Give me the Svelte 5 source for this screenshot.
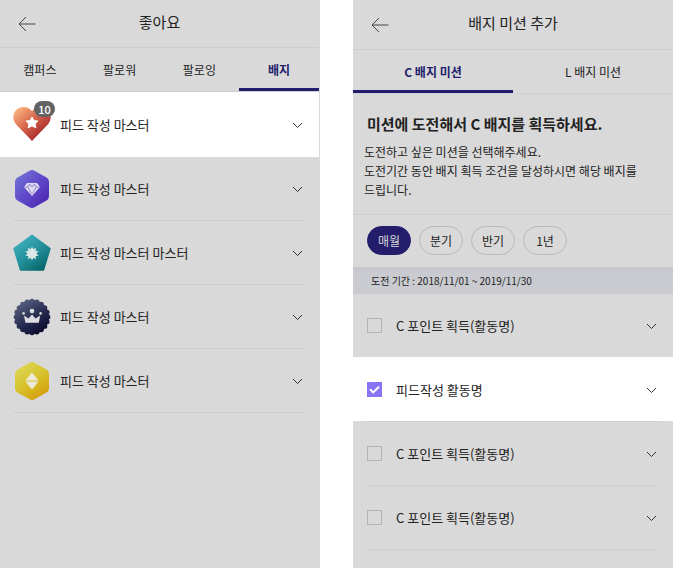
<script>
  const followTabs = ['캠퍼스', '팔로워', '팔로잉', '배지'];
  let followTab = $state('배지');

  const badges = [
    { shape: 'heart', name: '피드 작성 마스터', count: 10 },
    { shape: 'diamond', name: '피드 작성 마스터' },
    { shape: 'pentagon', name: '피드 작성 마스터 마스터' },
    { shape: 'crown', name: '피드 작성 마스터' },
    { shape: 'gold', name: '피드 작성 마스터' }
  ];

  const missionTabs = ['C 배지 미션', 'L 배지 미션'];
  let missionTab = $state('C 배지 미션');

  const periods = ['매월', '분기', '반기', '1년'];
  let period = $state('매월');

  let missions = $state([
    { name: 'C 포인트 획득(활동명)', checked: false },
    { name: '피드작성 활동명', checked: true },
    { name: 'C 포인트 획득(활동명)', checked: false },
    { name: 'C 포인트 획득(활동명)', checked: false }
  ]);

  const scallops = Array.from({ length: 20 }, (_, i) => {
    const a = (i / 20) * Math.PI * 2;
    return { x: 19 + Math.sin(a) * 15.6, y: 19 - Math.cos(a) * 15.6 };
  });

  const burst = Array.from({ length: 20 }, (_, i) => {
    const a = (i / 20) * Math.PI * 2;
    const r = i % 2 ? 4.4 : 7;
    return `${19 + Math.sin(a) * r},${19.5 - Math.cos(a) * r}`;
  }).join(' ');
</script>

{#snippet back()}
  <button class="back" aria-label="뒤로">
    <svg width="18" height="16" viewBox="0 0 18 16"><path d="M8 1 L1 8 L8 15 M1 8 H17.5" /></svg>
  </button>
{/snippet}

{#snippet chevron()}
  <svg class="chevron" width="11" height="7" viewBox="0 0 11 7"><path d="M1 1 L5.5 5.5 L10 1" /></svg>
{/snippet}

{#snippet icon(shape)}
  <svg width="38" height="38" viewBox="0 0 38 38" aria-hidden="true">
    {#if shape === 'heart'}
      <defs>
        <linearGradient id="g-heart" x1="0.05" y1="0.1" x2="0.75" y2="0.8">
          <stop offset="0" stop-color="#fbb380" /><stop offset="0.5" stop-color="#d96a50" /><stop offset="1" stop-color="#a92d2e" />
        </linearGradient>
      </defs>
      <path d="M19 36 L3.2 19.6 C-1 14.6 -0.4 8.4 3.4 4.8 C7.8 0.8 15 1 19 6.2 C23 1 30.2 0.8 34.6 4.8 C38.4 8.4 39 14.6 34.8 19.6 Z" fill="url(#g-heart)" />
      <path d="M19 12 L20.9 15.6 L25 16 L22.1 18.8 L22.8 22.8 L19 20.9 L15.2 22.8 L15.9 18.8 L13 16 L17.1 15.6 Z" fill="#fff" stroke="#fff" stroke-linejoin="round" />
    {:else if shape === 'diamond'}
      <defs>
        <linearGradient id="g-diamond" x1="0.1" y1="0.1" x2="0.9" y2="0.9">
          <stop offset="0" stop-color="#6f6fd6" /><stop offset="0.5" stop-color="#6048ca" /><stop offset="1" stop-color="#4d28b0" />
        </linearGradient>
      </defs>
      <path d="M16.5 0.8 Q19 -0.6 21.5 0.8 L33.5 7.6 Q36 9 36 11.8 V26.2 Q36 29 33.5 30.4 L21.5 37.2 Q19 38.6 16.5 37.2 L4.5 30.4 Q2 29 2 26.2 V11.8 Q2 9 4.5 7.6 Z" fill="url(#g-diamond)" />
      <path d="M14 13 H24 L27 17 L19 26 L11 17 Z" fill="#dedbf0" />
      <path d="M11.5 17 H15 L16.5 14 L19 17 L21.5 14 L23 17 H26.5 M15 17 L18.5 24 M23 17 L19.5 24" fill="none" stroke="#6850c8" stroke-width="0.6" />
    {:else if shape === 'pentagon'}
      <defs>
        <linearGradient id="g-penta" x1="0.15" y1="0.1" x2="0.8" y2="0.95">
          <stop offset="0" stop-color="#41aec0" /><stop offset="0.5" stop-color="#24919c" /><stop offset="1" stop-color="#08696c" />
        </linearGradient>
      </defs>
      <path d="M19 1.3 L37 14.6 L30.4 36 H7.6 L1 14.6 Z" fill="url(#g-penta)" stroke="url(#g-penta)" stroke-width="1.5" stroke-linejoin="round" />
      <polygon points={burst} fill="#dfe8e8" />
    {:else if shape === 'crown'}
      <defs>
        <linearGradient id="g-crown" gradientUnits="userSpaceOnUse" x1="8" y1="4" x2="28" y2="34">
          <stop offset="0" stop-color="#56607f" /><stop offset="0.5" stop-color="#2b3054" /><stop offset="1" stop-color="#0c0b30" />
        </linearGradient>
      </defs>
      <g fill="url(#g-crown)">
        <circle cx="19" cy="19" r="16.8" />
        {#each scallops as s}<circle cx={s.x} cy={s.y} r="2.7" />{/each}
      </g>
      <g fill="#dcdce2">
        <circle cx="19" cy="13" r="2.3" /><circle cx="10.6" cy="15.4" r="1.3" /><circle cx="27.6" cy="15.4" r="1.3" />
        <path d="M11 17.5 L15.5 20.5 L19 16.5 L22.5 20.5 L27.2 17.5 L25.8 24.8 H12.4 Z" />
      </g>
    {:else}
      <defs>
        <linearGradient id="g-gold" x1="0.2" y1="0.05" x2="0.75" y2="0.95">
          <stop offset="0" stop-color="#dcd653" /><stop offset="0.5" stop-color="#d8c22d" /><stop offset="1" stop-color="#d49f0b" />
        </linearGradient>
      </defs>
      <path d="M16.5 0.8 Q19 -0.6 21.5 0.8 L33.5 7.6 Q36 9 36 11.8 V26.2 Q36 29 33.5 30.4 L21.5 37.2 Q19 38.6 16.5 37.2 L4.5 30.4 Q2 29 2 26.2 V11.8 Q2 9 4.5 7.6 Z" fill="url(#g-gold)" />
      <path d="M19 10.5 L25.5 18.5 H12.5 Z M12.5 19.5 H25.5 L19 27.5 Z" fill="#ecead8" />
    {/if}
  </svg>
{/snippet}

<div class="screens">
  <section class="panel likes">
    <header>
      {@render back()}
      <h1>좋아요</h1>
    </header>
    <nav>
      {#each followTabs as tab}
        <button class:active={tab === followTab} onclick={() => (followTab = tab)}>{tab}</button>
      {/each}
    </nav>
    <ul>
      {#each badges as badge, i}
        <li class:lit={i === 0}>
          <button class="row">
            <span class="icon">
              {@render icon(badge.shape)}
              {#if badge.count}<span class="count">{badge.count}</span>{/if}
            </span>
            <span class="name">{badge.name}</span>
            {@render chevron()}
          </button>
        </li>
      {/each}
    </ul>
  </section>

  <section class="panel add">
    <header>
      {@render back()}
      <h1>배지 미션 추가</h1>
    </header>
    <nav>
      {#each missionTabs as tab}
        <button class:active={tab === missionTab} onclick={() => (missionTab = tab)}>{tab}</button>
      {/each}
    </nav>
    <div class="intro">
      <h2>미션에 도전해서 C 배지를 획득하세요.</h2>
      <p>도전하고 싶은 미션을 선택해주세요.<br />도전기간 동안 배지 획득 조건을 달성하시면 해당 배지를<br />드립니다.</p>
    </div>
    <div class="chips">
      {#each periods as p}
        <button class:on={p === period} onclick={() => (period = p)}>{p}</button>
      {/each}
    </div>
    <p class="term">도전 기간 : 2018/11/01 ~ 2019/11/30</p>
    <ul>
      {#each missions as mission, i}
        <li class:lit={i === 1}>
          <div class="row">
            <label>
              <span class="box">
                <input type="checkbox" bind:checked={mission.checked} />
                {#if mission.checked}
                  <svg width="15" height="15" viewBox="0 0 15 15"><path d="M3 7.2 L6.2 10.4 L12 4.8" /></svg>
                {/if}
              </span>
              <span class="name">{mission.name}</span>
            </label>
            <button class="more" aria-label="펼치기">{@render chevron()}</button>
          </div>
        </li>
      {/each}
    </ul>
  </section>
</div>

<style>
  :global(body) {
    margin: 0;
    background: #fff;
  }
  .screens {
    display: grid;
    grid-template-columns: 1fr 1fr;
    column-gap: 33px;
    height: 100vh;
    overflow: hidden;
    font-family: 'Noto Sans CJK KR', 'Noto Sans', sans-serif;
    color: #222;
  }
  .panel {
    min-width: 0;
    background: #d9d9d9;
    overflow: hidden;
  }
  .likes {
    border-right: 1px solid #d9d9d9;
  }
  button {
    margin: 0;
    padding: 0;
    border: 0;
    background: none;
    font: inherit;
    color: inherit;
    cursor: pointer;
  }
  h1, h2, p, ul {
    margin: 0;
    padding: 0;
    list-style: none;
  }
  svg {
    display: block;
  }
  header {
    display: grid;
    grid-template-columns: 36px 1fr 36px;
    align-items: center;
    height: 47px;
    border-bottom: 1px solid #cdcdcd;
  }
  .add header {
    height: 49px;
  }
  .back {
    justify-self: end;
  }
  .back svg {
    fill: none;
    stroke: #444;
    stroke-width: 1;
  }
  h1 {
    font-size: 15px;
    line-height: 20px;
    font-weight: 400;
    text-align: center;
    padding-bottom: 3px;
  }
  nav {
    display: flex;
    height: 44px;
    box-sizing: border-box;
    border-bottom: 1px solid #d0d0d0;
  }
  nav button {
    flex: 1;
    height: 43px;
    box-sizing: border-box;
    padding-top: 3px;
    border-bottom: 3px solid transparent;
    font-size: 12px;
    line-height: 18px;
  }
  nav .active {
    color: #231d6b;
    font-weight: 700;
    border-bottom-color: #231d6b;
  }
  .likes li {
    padding: 0 14px 0 13px;
  }
  .add li {
    padding: 0 14px;
  }
  .row {
    display: flex;
    align-items: center;
    width: 100%;
    height: 64px;
    box-sizing: border-box;
    border-bottom: 1px solid #cfcfcf;
    text-align: left;
  }
  .likes .lit {
    background: #fff;
  }
  .likes .lit .row {
    height: 65px;
    border-color: #fff;
  }
  /* The white band covers the divider above it and stops at its own. */
  .add .lit {
    margin-top: -1px;
    padding-top: 1px;
    background: linear-gradient(#fff, #fff) no-repeat 0 0 / 100% 64px;
  }
  .name {
    flex: 1;
    font-size: 13px;
    line-height: 20px;
  }
  .likes .name {
    padding: 1px 0 0 9px;
  }
  .chevron {
    margin: 2px 2px 0 0;
    fill: none;
    stroke: #333;
    stroke-width: 1;
  }
  .icon {
    position: relative;
  }
  .count {
    position: absolute;
    top: -4px;
    left: 21px;
    width: 21px;
    border-radius: 8px;
    background: #636363;
    color: #fff;
    font-size: 11px;
    font-weight: 500;
    line-height: 16px;
    text-align: center;
  }
  .intro {
    padding: 19px 11px 15px;
    border-bottom: 1px solid #cfcfcf;
  }
  h2 {
    padding: 0 3px 7px;
    font-size: 15px;
    line-height: 22px;
    font-weight: 700;
    white-space: nowrap;
  }
  .intro p {
    font-size: 12px;
    line-height: 19px;
    white-space: nowrap;
  }
  .chips {
    display: flex;
    gap: 8px;
    padding: 11px 14px 12px;
  }
  .chips button {
    width: 44px;
    height: 29px;
    box-sizing: border-box;
    border: 1px solid #b8b8b8;
    border-radius: 15px;
    font-size: 12px;
    line-height: 18px;
  }
  .chips .on {
    background: #231d6b;
    border-color: #231d6b;
    color: #d9d9d9;
  }
  .term {
    padding: 4px 18px 3px;
    background: linear-gradient(#c5c6cb, #cacbd0 6px);
    font-size: 10px;
    line-height: 20px;
  }
  label {
    display: flex;
    flex: 1;
    align-items: center;
    gap: 14px;
  }
  .box {
    position: relative;
  }
  .box input {
    display: block;
    appearance: none;
    width: 15px;
    height: 15px;
    margin: 0;
    border: 1px solid #b3b3b3;
  }
  .box input:checked {
    background: #8a73f5;
    border-color: #8a73f5;
  }
  .box svg {
    position: absolute;
    top: 0;
    left: 0;
    fill: none;
    stroke: #fff;
    stroke-width: 2;
    pointer-events: none;
  }
</style>
